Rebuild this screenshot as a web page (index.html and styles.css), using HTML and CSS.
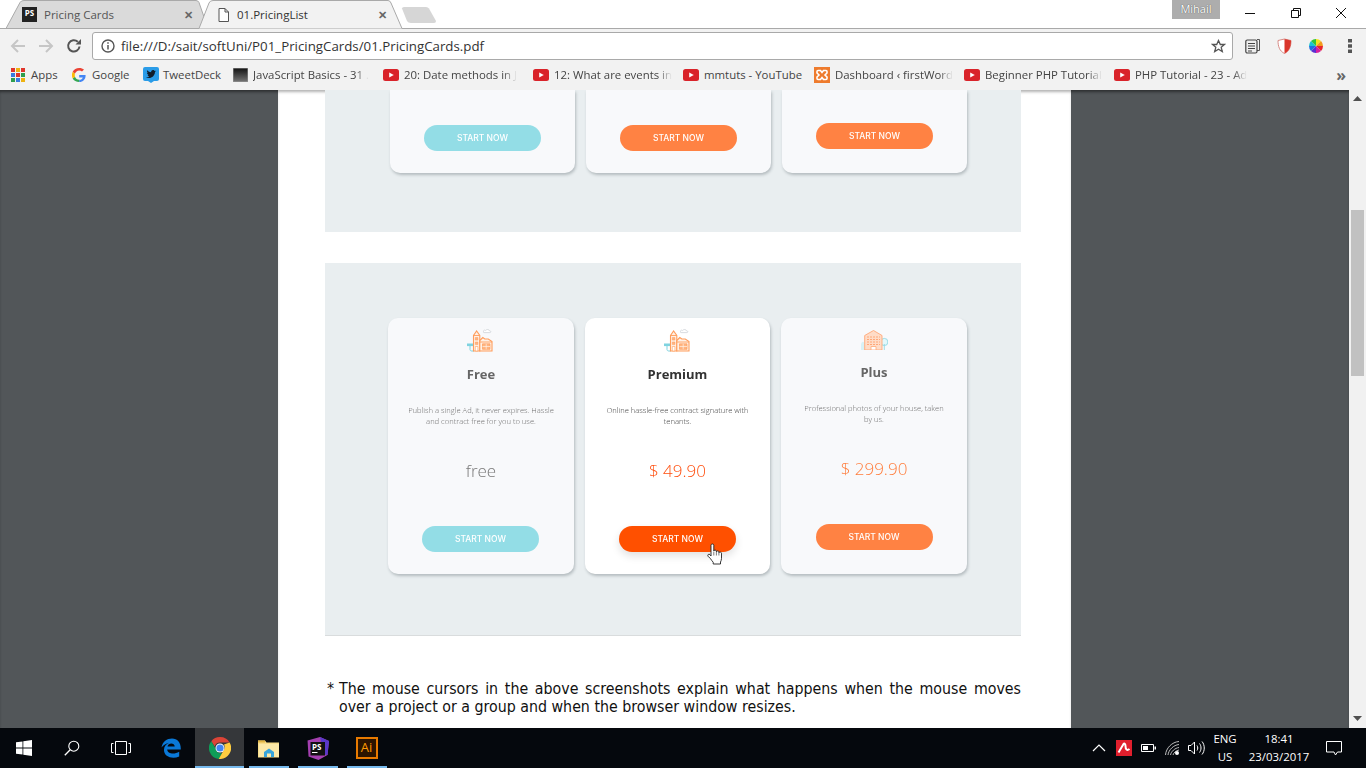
FILE: index.html
```html
<!doctype html>
<html lang="en">
    <head>
        <meta charset="UTF-8" />
        <title>01.PricingList</title>
        <link rel="stylesheet" href="styles.css">
    </head>
    <body>
        <!-- icons used more than once -->
        <svg class="defs" width="0" height="0">
            <symbol id="yt" viewBox="0 0 16 12">
                <rect width="16" height="12" rx="2.5" fill="#d9232a"/>
                <path d="M6.2 3.5l4.6 2.5-4.6 2.5z" fill="#fff"/>
            </symbol>
            <symbol id="house" viewBox="0 0 26 24">
                <path d="M16.5 3.6c-.4-1.4 1.400-1.900 2.200-1.100.8-1.500 3.500-1.300 3.700.300 1.500-.2 2 1.600.500 1.800h-5.800c-.8 0-1-.7-.6-1z" fill="#fff" stroke="#c9cdd2" stroke-width=".7"/>
                <path d="M3 18v3.500c0 1 .8 1.500 2 1.500h2" fill="none" stroke="#7fd3e0" stroke-width="1"/>
                <rect x="0" y="15.500" width="6" height="2.600" fill="#7fd3e0"/>
                <path d="M6.500 23V7.500L9.600 3l3.200 4.500V23z" fill="#fff1e6" stroke="#ff9d5c" stroke-width="1.100"/>
                <path d="M6.500 7.500h6.300" stroke="#ff9d5c" stroke-width=".9"/>
                <path d="M8.300 9.500h2.600v2.600H8.300zM8.300 14h2.600v2.600H8.300z" fill="#ffb582" stroke="#ff9d5c" stroke-width=".5"/>
                <path d="M8.300 18.500h2.600V23H8.300z" fill="#fff" stroke="#ff9d5c" stroke-width=".6"/>
                <path d="M12.800 12.500l3-3 2 1.500h3.500l3.700 2.500V23H12.800z" fill="#fff1e6" stroke="#ff9d5c" stroke-width="1.100"/>
                <path d="M12.800 14h12.200" stroke="#ff9d5c" stroke-width=".9"/>
                <path d="M15.500 15.800h7.500v5.500h-7.500z" fill="#ffb582" stroke="#ff9d5c" stroke-width=".7"/>
                <path d="M19.200 15.800v5.500M15.500 18.500h7.500" stroke="#fff1e6" stroke-width=".7"/>
            </symbol>
        </svg>

        <header class="tabstrip">
            <svg class="tab-shapes" width="1366" height="29">
                <path d="M6 28.500L20 2.500Q21 .5 24 .5H196Q198 .5 199 2.500L208 28.500z" fill="#dadada" stroke="#a9a9a9"/>
                <path d="M0 28.500H199L209 3Q210 .5 213 .5H388Q390 .5 391 3L402 28.500H1366V29H0z" fill="#f2f2f2" stroke="#a9a9a9"/>
                <path d="M402 8.500Q402 7 404 7H426Q428 7 429 8.500L436 21Q436 23 434 23H411Q408 23 407 21z" fill="#d6d6d6"/>
            </svg>
            <div class="tab tab-back">
                <span class="ps-icon">PS</span>
                <span class="tab-title">Pricing Cards</span>
                <span class="tab-close">✕</span>
            </div>
            <div class="tab tab-front">
                <svg width="11" height="14" viewBox="0 0 11 14"><path d="M1 .5h6l3.500 3.500v9.500H1zM7 .5V4h3.500" fill="#fff" stroke="#555"/></svg>
                <span class="tab-title">01.PricingList</span>
                <span class="tab-close">✕</span>
            </div>
            <div class="user-badge">Mihail</div>
            <div class="window-controls">
                <svg width="12" height="12" viewBox="0 0 12 12"><path d="M1 6.500h10" stroke="#111"/></svg>
                <svg width="12" height="12" viewBox="0 0 12 12"><path d="M1.500 3.500h7v7h-7zM3.500 3.500v-2h7v7h-2" fill="none" stroke="#111"/></svg>
                <svg width="12" height="12" viewBox="0 0 12 12"><path d="M1 1l10 10M11 1L1 11" stroke="#111"/></svg>
            </div>
        </header>

        <div class="toolbar">
            <div class="nav-buttons">
                <svg width="16" height="16" viewBox="0 0 16 16"><path d="M15 8H2M8 2L2 8l6 6" fill="none" stroke="#c6c6c6" stroke-width="2"/></svg>
                <svg width="16" height="16" viewBox="0 0 16 16"><path d="M1 8h13M8 2l6 6-6 6" fill="none" stroke="#c6c6c6" stroke-width="2"/></svg>
                <svg width="16" height="16" viewBox="0 0 16 16"><path d="M13.500 8.500A5.700 5.700 0 1 1 11.800 3.800" fill="none" stroke="#555" stroke-width="2"/><path d="M9.500 6.500H15V1z" fill="#555"/></svg>
            </div>
            <div class="omnibox">
                <svg width="14" height="14" viewBox="0 0 14 14"><circle cx="7" cy="7" r="6" fill="none" stroke="#555" stroke-width="1.400"/><path d="M7 6v4.500M7 3.200v1.500" stroke="#555" stroke-width="1.500"/></svg>
                <span class="url">file:///D:/sait/softUni/P01_PricingCards/01.PricingCards.pdf</span>
                <svg class="star" width="15" height="15" viewBox="0 0 15 15"><path d="M7.500 1.500l1.800 4h4.200l-3.300 2.800 1.100 4.300-3.800-2.400-3.800 2.400 1.100-4.300L1.500 5.500h4.200z" fill="none" stroke="#555" stroke-width="1.300"/></svg>
            </div>
            <div class="extensions">
                <svg width="15" height="16" viewBox="0 0 15 16"><path d="M12 1.500h2.500v11H12" fill="none" stroke="#555"/><rect x=".8" y="2" width="11.200" height="13" rx="1.500" fill="#eee" stroke="#444" stroke-width="1.200"/><path d="M3 5.500h7M3 8h7M3 10.500h7M3 13h4" stroke="#444"/></svg>
                <svg width="15" height="16" viewBox="0 0 15 16"><path d="M1 2.500L7.500 1 14 2.500c0 6-1.500 10.500-6.500 13C2.500 13 1 8.500 1 2.500z" fill="#fff" stroke="#d88b86"/><path d="M7.500 1L14 2.500c0 6-1.500 10.500-6.500 13z" fill="#d9362c"/></svg>
                <svg class="color-wheel" width="16" height="16" viewBox="0 0 16 16">
                    <path d="M8 8V1a7 7 0 0 1 5 2z" fill="#f6e31c"/><path d="M8 8l5-5a7 7 0 0 1 2 5z" fill="#f39a1d"/>
                    <path d="M8 8h7a7 7 0 0 1-2 5z" fill="#e8262c"/><path d="M8 8l5 5a7 7 0 0 1-5 2z" fill="#d61fa0"/>
                    <path d="M8 8v7a7 7 0 0 1-5-2z" fill="#5b2fd0"/><path d="M8 8l-5 5a7 7 0 0 1-2-5z" fill="#1f6fe0"/>
                    <path d="M8 8H1a7 7 0 0 1 2-5z" fill="#1cc4d0"/><path d="M8 8L3 3a7 7 0 0 1 5-2z" fill="#2fc43a"/>
                </svg>
                <svg class="menu-dots" width="4" height="14" viewBox="0 0 4 14"><path d="M0 0h4v3.500H0zM0 5.300h4v3.500H0zM0 10.500h4V14H0z" fill="#555"/></svg>
            </div>
        </div>

        <nav class="bookmarks">
            <a class="mark mark-apps">
                <svg class="g-logo" width="14" height="14" viewBox="1 1 14 14">
                    <path d="M1 1h4v4H1z" fill="#e0352b"/><path d="M6 1h4v4H6z" fill="#eeb211"/><path d="M11 1h4v4h-4z" fill="#e0352b"/>
                    <path d="M1 6h4v4H1z" fill="#3a7ce0"/><path d="M6 6h4v4H6z" fill="#e0352b"/><path d="M11 6h4v4h-4z" fill="#2f9e4f"/>
                    <path d="M1 11h4v4H1z" fill="#2f9e4f"/><path d="M6 11h4v4H6z" fill="#3a7ce0"/><path d="M11 11h4v4h-4z" fill="#eeb211"/>
                </svg>
                <span>Apps</span>
            </a>
            <a class="mark mark-google">
                <svg class="g-logo" width="14" height="14" viewBox="0 0 14 14">
                    <path d="M13.600 7H7.200v2.500h3.600c-.4 1.500-1.800 2.300-3.600 2.300V14c3.900 0 6.600-2.700 6.400-7z" fill="#4285f4"/>
                    <path d="M7.200 11.800c-2 0-3.600-1.200-4.200-3L.7 10.600C1.800 12.700 4.300 14 7.200 14z" fill="#34a853"/>
                    <path d="M3 8.800c-.3-1-.3-2.200 0-3.200L.7 3.700c-1 2-1 4.900 0 6.900z" fill="#fbbc05"/>
                    <path d="M7.200 2.400c1.100 0 2 .4 2.800 1.100l2-2C10.800.6 9.200 0 7.200 0 4.300 0 1.800 1.500.7 3.700L3 5.600c.6-1.900 2.200-3.200 4.200-3.200z" fill="#ea4335"/>
                </svg>
                <span>Google</span>
            </a>
            <a class="mark mark-tweet">
                <svg width="16" height="16" viewBox="0 0 16 16"><path d="M2 0h12q2 0 2 2v10q0 2-2 2h-3l-3 2-3-2H2q-2 0-2-2V2q0-2 2-2z" fill="#2a9ce8"/><path d="M3.500 10.500c4 1.500 8-.5 8.500-5.500l1-1.200-1.300.2-1-1c-1.500-.5-3 .8-2.500 2.300-1.500 0-3-.8-4-2-.5 1 0 2 .7 2.700l-.9-.2c0 1 .6 1.700 1.600 2.100h-1c.3.800 1 1.200 1.800 1.300-1 .7-1.900 1-2.900.8z" fill="#111d2b"/></svg>
                <span>TweetDeck</span>
            </a>
            <a class="mark mark-long">
                <svg width="15" height="14" viewBox="0 0 15 14"><defs><linearGradient id="jsfill" x1="0" y1="0" x2="0" y2="1"><stop offset="0" stop-color="#111"/><stop offset="1" stop-color="#777"/></linearGradient></defs><rect width="15" height="14" fill="url(#jsfill)" stroke="#999"/></svg>
                <span>JavaScript Basics - 31 .</span>
            </a>
            <a class="mark mark-long">
                <svg width="16" height="12"><use href="#yt"/></svg>
                <span>20: Date methods in J</span>
            </a>
            <a class="mark mark-long">
                <svg width="16" height="12"><use href="#yt"/></svg>
                <span>12: What are events in</span>
            </a>
            <a class="mark mark-mid">
                <svg width="16" height="12"><use href="#yt"/></svg>
                <span>mmtuts - YouTube</span>
            </a>
            <a class="mark mark-long">
                <svg width="16" height="16" viewBox="0 0 16 16"><rect width="16" height="16" fill="#ee7b2d"/><path d="M4 3.500h2.500L8 5.500l1.500-2H12q1 0 1 1v1.500L11 8l2 2v1.500q0 1-1 1H9.500L8 10.500l-1.500 2H4q-1 0-1-1V10l2-2-2-2V4.500q0-1 1-1z" fill="none" stroke="#fff" stroke-width="1.600"/></svg>
                <span>Dashboard ‹ firstWord</span>
            </a>
            <a class="mark mark-long">
                <svg width="16" height="12"><use href="#yt"/></svg>
                <span>Beginner PHP Tutorial</span>
            </a>
            <a class="mark mark-long">
                <svg width="16" height="12"><use href="#yt"/></svg>
                <span>PHP Tutorial - 23 - Ad</span>
            </a>
            <span class="more">»</span>
        </nav>

        <main class="viewer">
            <div class="pdf-area">
                <article class="pdf-page">
                    <section class="panel panel-top">
                        <div class="card-row card-row-top">
                            <div class="card card-cut"><a class="btn btn-cyan">START NOW</a></div>
                            <div class="card card-cut"><a class="btn btn-orange">START NOW</a></div>
                            <div class="card card-cut card-raised"><a class="btn btn-orange">START NOW</a></div>
                        </div>
                    </section>

                    <section class="panel panel-main">
                        <div class="card-row card-row-main">
                            <div class="card">
                                <svg class="card-icon" width="26" height="24"><use href="#house"/></svg>
                                <h3>Free</h3>
                                <p class="desc">Publish a single Ad, it never expires. Hassle and contract free for you to use.</p>
                                <div class="price price-free">free</div>
                                <a class="btn btn-cyan">START NOW</a>
                            </div>
                            <div class="card card-active">
                                <svg class="card-icon" width="26" height="24"><use href="#house"/></svg>
                                <h3>Premium</h3>
                                <p class="desc">Online hassle-free contract signature with tenants.</p>
                                <div class="price">$ 49.90</div>
                                <a class="btn btn-hot">START NOW</a>
                                <svg class="hand" width="16" height="22" viewBox="0 0 16 22">
                                    <path d="M4 13V2.200C4 .6 6.800.6 6.800 2.200V8c0-1.200 2.600-1.200 2.600 0v.8c0-1.100 2.500-1.100 2.500.2v.8c0-1 2.600-.9 2.600.4v5.300c0 1.500-.6 2.500-1 3.500v2H6.200v-1.800c-1-1-1.700-2-2.700-3.500L1 13.200c-.9-1.400.9-2.800 2-1.500z" fill="#fff" stroke="#222" stroke-width=".9"/>
                                    <path d="M6.800 8.500v4M9.400 8.800v3.700M11.900 9.800v2.700" stroke="#222" stroke-width=".6"/>
                                </svg>
                            </div>
                            <div class="card card-raised">
                                <svg class="card-icon" width="27" height="20" viewBox="0 0 27 20">
                                    <circle cx="23.300" cy="12" r="3.600" fill="#e3f8fb" stroke="#93d9e4" stroke-width=".9"/>
                                    <path d="M23.300 14v6" stroke="#93d9e4" stroke-width=".9"/>
                                    <path d="M0 20v-6q1.500-4 3.500-1V20z" fill="#d8f2f6"/>
                                    <path d="M3.700 20V5.500L12.500.5l8.500 5V20z" fill="#ffdcc7" stroke="#ffa878" stroke-width=".9"/>
                                    <path d="M6 7h13M6 9.500h13M6 12h13M6 14.500h13" stroke="#ffa878" stroke-width="1" stroke-dasharray="2 1"/>
                                    <path d="M10 20v-3.500h5V20z" fill="#fff" stroke="#ffa878" stroke-width=".8"/>
                                </svg>
                                <h3>Plus</h3>
                                <p class="desc">Professional photos of your house, taken by us.</p>
                                <div class="price">$ 299.90</div>
                                <a class="btn btn-orange">START NOW</a>
                            </div>
                        </div>
                    </section>

                    <div class="footnote">
                        <span class="footnote-mark">*</span>
                        <p>The mouse cursors in the above screenshots explain what happens when the mouse moves over a project or a group and when the browser window resizes.</p>
                    </div>
                </article>
            </div>
            <aside class="scrollbar">
                <svg width="9" height="5" viewBox="0 0 9 5"><path d="M4.500 0L9 5H0z" fill="#505050"/></svg>
                <div class="thumb"></div>
                <svg class="arrow-down" width="9" height="5" viewBox="0 0 9 5"><path d="M0 0h9L4.500 5z" fill="#505050"/></svg>
            </aside>
        </main>

        <footer class="taskbar">
            <div class="task">
                <svg width="16" height="16" viewBox="0 0 16 16"><path d="M0 2.300l6.500-.9v6.200H0zM7.300 1.300L16 0v7.600H7.300zM0 8.400h6.500v6.200L0 13.700zM7.300 8.400H16V16l-8.700-1.300z" fill="#fff"/></svg>
            </div>
            <div class="task">
                <svg width="16" height="16" viewBox="0 0 16 16"><circle cx="9.800" cy="6.200" r="5" fill="none" stroke="#fff" stroke-width="1.100"/><path d="M6.200 9.800L.8 15.200" stroke="#fff" stroke-width="1.300"/></svg>
            </div>
            <div class="task">
                <svg width="20" height="14" viewBox="0 0 20 14"><path d="M4.500.5h11v13h-11zM2.500 2.500H.5v9h2M17.500 2.500h2v9h-2" fill="none" stroke="#fff"/></svg>
            </div>
            <div class="task task-app">
                <svg width="20" height="20" viewBox="0 0 20 20"><path d="M.5 9.500C1.500 3.500 6 .5 11 .5c5.500 0 9 4 8.800 11H6.200c.3 4 6.500 5.500 12 2.300v4.700C11.500 21.500 2.500 19 3 11.500 3.200 8.500 5 6 8 4.800 5 5.500 2.500 7 .5 9.500zM6.500 8.500h7.200c0-4-6.500-4.300-7.200 0z" fill="#0a78d7" fill-rule="evenodd"/></svg>
            </div>
            <div class="task task-app task-running task-focus">
                <svg width="22" height="22" viewBox="0 0 22 22">
                    <path d="M11 0a11 11 0 0 1 9.600 5.500H11A5.500 5.500 0 0 0 5.700 9.500L2.300 4.200A11 11 0 0 1 11 0z" fill="#db4437"/>
                    <path d="M2.300 4.200l4.800 8.300A5.500 5.500 0 0 0 13 16.300L9.700 21.900A11 11 0 0 1 2.300 4.200z" fill="#0f9d58"/>
                    <path d="M20.600 5.500A11 11 0 0 1 9.700 21.900l4.800-8.300A5.500 5.500 0 0 0 15 7.500z" fill="#ffcd40"/>
                    <circle cx="11" cy="11" r="4.500" fill="#fff"/><circle cx="11" cy="11" r="3.600" fill="#4285f4"/>
                </svg>
            </div>
            <div class="task task-app task-running">
                <svg width="22" height="19" viewBox="0 0 22 19"><path d="M0 1.500h7l1.500 2H21v15H0z" fill="#f8dd8b"/><path d="M0 1.500h7v2H0z" fill="#e2b543"/><path d="M1 5h20v13H1z" fill="#fce9a8"/><path d="M6 18v-5l5-3.500 5 3.500v5z" fill="#38a5dc"/><path d="M9 18v-3.500h4V18z" fill="#fce9a8"/></svg>
            </div>
            <div class="task task-app task-running">
                <svg width="24" height="23" viewBox="0 0 24 23"><path d="M1.500 3.500L14 0l9 4-1.500 14-9 5-10-3.500z" fill="#a43fb0"/><path d="M14 0l9 4-1.500 14-4-.5z" fill="#5a38c8"/><path d="M4.500 5h14.500v13.500H4.500z" fill="#111"/><text class="ps-label" x="6" y="12.500">PS</text><path d="M6 15.500h5.500" stroke="#fff"/></svg>
            </div>
            <div class="task task-app task-running">
                <span class="ai-icon">Ai</span>
            </div>

            <div class="tray">
                <svg class="tray-chevron" width="14" height="8" viewBox="0 0 14 8"><path d="M1 7l6-6 6 6" fill="none" stroke="#fff" stroke-width="1.200"/></svg>
                <svg class="tray-avira" width="16" height="16" viewBox="0 0 16 16"><rect width="16" height="16" fill="#e01f2d"/><path d="M2.500 12.500L7.500 4c1-1 2 0 2 2 0 3.500 1.500 5 4 3" fill="none" stroke="#fff" stroke-width="2"/></svg>
                <svg class="tray-battery" width="15" height="10" viewBox="0 0 15 10"><path d="M.5 1.500h12v7H.5z" fill="none" stroke="#fff"/><path d="M2 3h5v4H2z" fill="#fff"/><path d="M13.500 3.500H15v3h-1.500z" fill="#fff"/></svg>
                <svg class="tray-wifi" width="15" height="15" viewBox="0 0 15 15"><path d="M.5 14C1 7 7 1 14 .5M3 14c.5-5 5.500-10 11-10.500M5.500 14C6 10.500 10 7 14 6.500M8 14c.5-2 3-4.500 6-5" fill="none" stroke="#bbb"/><circle cx="12" cy="12" r="2" fill="#fff"/></svg>
                <svg class="tray-volume" width="17" height="14" viewBox="0 0 17 14"><path d="M.5 4.500h2.500L6.500 1v12L3 9.500H.5z" fill="none" stroke="#fff"/><path d="M9 4.500c1 1.500 1 3.500 0 5M11.500 2.500c2 2.500 2 6.500 0 9M14 .5c3 3.500 3 9.500 0 13" fill="none" stroke="#fff"/></svg>
                <div class="tray-lang">ENG<br>US</div>
                <div class="tray-clock">18:41<br>23/03/2017</div>
                <svg class="tray-notify" width="16" height="15" viewBox="0 0 16 15"><path d="M.5.5h15v10.500h-4l-2 3-1.500-3H.5z" fill="none" stroke="#fff"/></svg>
            </div>
        </footer>
    </body>
</html>
```

FILE: styles.css
```css
* {
    box-sizing: border-box;
}
html, body {
    margin: 0;
    height: 768px;
    overflow: hidden;
}
body {
    display: flex;
    flex-direction: column;
    font-family: "Open Sans", sans-serif;
    background: #fff;
}
svg {
    display: block;
    flex: none;
}
.defs {
    position: absolute;
}

/* tab strip */
.tabstrip {
    position: relative;
    height: 29px;
    flex: none;
    display: flex;
    font-size: 11.5px;
    color: #555;
    background: #fff;
}
.tab-shapes {
    position: absolute;
    left: 0;
    top: 0;
}
.tab {
    position: relative;
    display: flex;
    align-items: center;
    height: 29px;
}
.tab-back {
    width: 205px;
    padding-left: 22px;
}
.tab-front {
    width: 195px;
    padding-left: 13px;
    color: #333;
}
.tab-title {
    flex: 1;
    margin-left: 7px;
}
.tab-front .tab-title {
    margin-left: 8px;
}
.tab-close {
    font-size: 11px;
    font-weight: 700;
    color: #666;
    margin-right: 12px;
}
.tab-front .tab-close {
    margin-right: 13px;
}
.ps-icon {
    width: 15px;
    height: 15px;
    background: #222;
    color: #fff;
    font-size: 8px;
    font-weight: 700;
    line-height: 12px;
    text-align: center;
}
.user-badge {
    position: relative;
    margin-left: auto;
    width: 48px;
    height: 19px;
    background: #adadad;
    color: #fff;
    font-size: 11px;
    line-height: 18px;
    text-align: center;
    text-shadow: 0 0 1px #333;
}
.window-controls {
    position: relative;
    display: flex;
    align-items: flex-start;
    gap: 33.5px;
    width: 146px;
    padding: 7px 0 0 24px;
}

/* toolbar */
.toolbar {
    height: 33px;
    flex: none;
    display: flex;
    align-items: center;
    background: #f2f2f2;
    padding-top: 1px;
}
.nav-buttons {
    display: flex;
    gap: 12px;
    width: 92px;
    padding-left: 10px;
}
.omnibox {
    display: flex;
    align-items: center;
    width: 1141px;
    height: 28px;
    background: #fff;
    border: 1px solid #a9a9a9;
    border-radius: 3px;
    padding: 0 6px 0 8px;
}
.url {
    flex: 1;
    margin-left: 6px;
    font-size: 13.3px;
    color: #333;
}
.extensions {
    display: flex;
    align-items: center;
    gap: 17px;
    padding-left: 12px;
}
.color-wheel {
    margin-left: -1px;
}
.menu-dots {
    margin-left: 7px;
}

/* bookmarks */
.bookmarks {
    height: 28px;
    flex: none;
    display: flex;
    align-items: center;
    padding: 0 0 2px 11px;
    background: #f2f2f2;
    font-size: 11.4px;
    color: #444;
}
.mark {
    display: flex;
    align-items: center;
    gap: 4px;
    white-space: nowrap;
}
.mark span {
    margin-bottom: 2px;
}
.g-logo {
    margin-right: 2px;
}
.mark-apps {
    width: 61px;
}
.mark-google {
    width: 71px;
}
.mark-tweet {
    width: 90px;
}
.mark-long {
    width: 150px;
    gap: 5px;
}
.mark-mid {
    width: 131px;
    gap: 5px;
}
.mark-long span {
    -webkit-mask-image: linear-gradient(to left, transparent, #000 14px);
    mask-image: linear-gradient(to left, transparent, #000 14px);
}
.more {
    margin-left: auto;
    padding-right: 20px;
    font-size: 16px;
    font-weight: 700;
    line-height: 20px;
    color: #666;
}

/* pdf viewer */
.viewer {
    flex: 1;
    display: flex;
    min-height: 0;
}
.pdf-area {
    flex: 1;
    display: flex;
    justify-content: center;
    background: #525659;
    box-shadow: inset 0 3px 3px -1px rgba(0, 0, 0, 0.45);
    overflow: hidden;
}
.pdf-page {
    width: 793px;
    height: 638px;
    padding: 0 50px 0 47px;
    background: #fff;
    box-shadow: inset 0 3px 3px -1px rgba(0, 0, 0, 0.3);
}
.panel {
    background: #e9eef0;
}
.panel-top {
    height: 142px;
}
.panel-main {
    height: 373px;
    margin-top: 31px;
    padding-top: 55px;
    border-bottom: 1px solid #d9dcdd;
}
.card-row {
    display: grid;
    filter: blur(0.3px);
}
.card-row-top {
    grid-template-columns: 185px 185px 185px;
    gap: 11px;
    padding-left: 65px;
}
.card-row-main {
    grid-template-columns: 186px 185px 186px;
    gap: 11px;
    padding-left: 63px;
}

/* pricing cards */
.card {
    position: relative;
    display: flex;
    flex-direction: column;
    align-items: center;
    height: 256px;
    padding: 10px 19px 22px;
    background: #f8f9fb;
    border-radius: 10px;
    box-shadow: 1px 2px 3px rgba(70, 85, 90, 0.32);
    text-align: center;
}
.card-cut {
    height: 83px;
    border-radius: 0 0 10px 10px;
    justify-content: flex-end;
}
.card-raised {
    padding-top: 12px;
    padding-bottom: 24px;
}
.card-icon {
    height: 24px;
    margin-left: -2px;
}
.card-raised .card-icon {
    height: 20px;
    margin-left: 0;
}
.card-active {
    background: #fff;
}
.card h3 {
    margin: 12px 0 0;
    font-size: 13px;
    line-height: 20px;
    font-weight: 700;
    color: #666;
}
.card-active h3 {
    color: #333;
}
.desc {
    margin: 21px 0 0;
    height: 21px;
    font-size: 7.6px;
    line-height: 10.5px;
    font-weight: 300;
    color: #6e6e6e;
}
.card-active .desc {
    color: #3c3c3c;
}
.price {
    margin-top: 33px;
    font-size: 17px;
    line-height: 24px;
    font-weight: 300;
    color: #ff7d3c;
}
.price-free {
    color: #777;
}
.card-active .price {
    color: #ff4f0f;
}
.btn {
    display: block;
    width: 117px;
    height: 26px;
    margin-top: auto;
    border-radius: 13px;
    color: #fff;
    font-family: Inter, sans-serif;
    font-size: 8.5px;
    font-weight: 500;
    line-height: 27px;
    text-align: center;
}
.btn-cyan {
    background: #93dde6;
}
.card-row-main .btn-cyan {
    margin-left: -1px;
}
.btn-orange {
    background: #ff8243;
}
.btn-hot {
    background: #ff5000;
    box-shadow: 0 4px 8px rgba(0, 0, 0, 0.12);
}
.hand {
    position: absolute;
    left: 122px;
    top: 225px;
}

/* footnote under the cards */
.footnote {
    display: flex;
    margin-top: 44px;
    padding-left: 2px;
    font-family: "DejaVu Sans", sans-serif;
    font-stretch: condensed;
    font-size: 15.8px;
    line-height: 17.5px;
    color: #111;
}
.footnote-mark {
    width: 12px;
    flex: none;
}
.footnote p {
    margin: 0;
    flex: 1;
    text-align: justify;
}

/* scrollbar */
.scrollbar {
    width: 17px;
    flex: none;
    display: flex;
    flex-direction: column;
    align-items: center;
    padding-top: 6px;
    background: #f1f1f1;
}
.thumb {
    width: 13px;
    height: 166px;
    margin-top: 109px;
    background: #c1c1c1;
}
.arrow-down {
    margin-top: 340px;
}

/* windows taskbar */
.taskbar {
    height: 40px;
    flex: none;
    display: flex;
    background: #05080d;
    color: #fff;
}
.task {
    position: relative;
    width: 48px;
    height: 40px;
    flex: none;
    display: flex;
    align-items: center;
    justify-content: center;
}
.task:nth-child(3) {
    width: 50px;
}
.task-app {
    width: 49px;
}
.task-running::after {
    content: "";
    position: absolute;
    left: 5px;
    right: 4px;
    bottom: 0;
    height: 2px;
    background: #76b9ed;
}
.task-focus {
    background: #35373a;
}
.task-focus::after {
    left: 0;
    right: 0;
}
.ps-label {
    font-family: "Open Sans", sans-serif;
    font-size: 8px;
    font-weight: 700;
    fill: #fff;
}
.ai-icon {
    width: 22px;
    height: 22px;
    background: #2b1400;
    border: 2px solid #e87a00;
    color: #ff9a00;
    font-size: 13px;
    line-height: 17px;
    text-align: center;
}
.tray {
    flex: 1;
    display: flex;
    align-items: center;
    font-size: 11.4px;
    line-height: 18px;
    text-align: center;
    padding-left: 701px;
}
.tray-avira {
    margin-left: 10px;
}
.tray-battery {
    margin-left: 9px;
}
.tray-wifi {
    margin-left: 9px;
}
.tray-volume {
    margin-left: 8px;
}
.tray-lang {
    width: 34px;
    margin-left: 3px;
}
.tray-clock {
    width: 68px;
    margin-left: 3px;
}
.tray-notify {
    margin-left: 13px;
}
```
